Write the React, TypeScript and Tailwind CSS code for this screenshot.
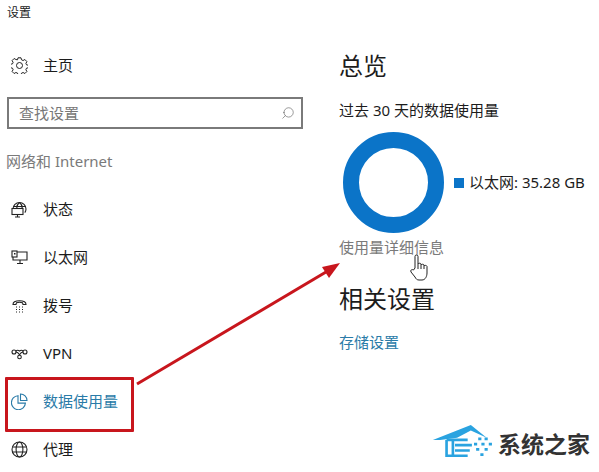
import { Search } from 'lucide-react';

const FONT = "font-['Noto_Sans','Noto_Sans_CJK_SC',sans-serif]";

function GearIcon() {
  return (
    <svg width="17" height="17" viewBox="0 0 17 17" fill="none" stroke="#222" strokeWidth="1">
      <circle cx="8.500" cy="8.500" r="3" />
      <path d="M7 .8h3l.5 2 1.600.7 1.800-1 2 2.100-1 1.800.6 1.400 2 .5v2.400l-2 .5-.6 1.500 1 1.800-2 2-1.800-1-1.600.7-.5 1.900H7l-.5-2-1.600-.6-1.800 1-2-2 1-1.800-.6-1.500-2-.5V7.300l2-.5.6-1.400-1-1.800 2-2.100 1.800 1L6.500 2.800z" />
    </svg>
  );
}

function StatusIcon() {
  return (
    <svg width="17" height="17" viewBox="0 0 17 17" fill="none" stroke="#222" strokeWidth="1.100">
      <path d="M2 8a6.500 6.500 0 1 1 13 0c0 1.500-.4 2.600-1.200 3.600" />
      <path d="M8.500 1.500C6.500 3 5.800 5 5.800 7M8.500 1.500c2 1.500 2.700 3.500 2.700 5.500M2.500 5.500h12" />
      <rect x="1" y="7.500" width="11" height="6" fill="#fff" />
      <path d="M6.500 13.500v2.500M4 16h5" />
    </svg>
  );
}

function EthernetIcon() {
  return (
    <svg width="17" height="17" viewBox="0 0 17 17" fill="none" stroke="#222" strokeWidth="1.100">
      <path d="M6 3h10v8H2V8" />
      <rect x="1" y="2" width="5" height="6" />
      <rect x="3" y="4" width="1.500" height="1.500" fill="#222" stroke="none" />
      <path d="M9 11v3M6 14.500h6" />
    </svg>
  );
}

function DialIcon() {
  return (
    <svg width="17" height="17" viewBox="0 0 17 17" fill="none" stroke="#222" strokeWidth="1.100">
      <path d="M2 7.500c0-1 .3-2 1.500-2.700C6 3.300 11 3.300 13.500 4.800 14.700 5.500 15 6.500 15 7.500h-3l-.5-1.800c-1.500-.5-4.500-.5-6 0L5 7.500z" />
      <path d="M5 10h1M8 10h1M11 10h1M5 12.500h1M8 12.500h1M11 12.500h1M5 15h1M8 15h1M11 15h1" strokeWidth="1" />
    </svg>
  );
}

function VpnIcon() {
  return (
    <svg width="17" height="17" viewBox="0 0 17 17" fill="none" stroke="#222" strokeWidth="1.100">
      <circle cx="3" cy="7" r="2" />
      <circle cx="14" cy="7" r="2" />
      <circle cx="8.500" cy="12" r="1.800" />
      <path d="M5 7c1.500 0 2.500 1 3.500 2.800M12 7c-1.500 0-2.500 1-3.500 2.800M5 6c1-1 2-1.200 3.500 0 1.500-1.200 2.500-1 3.500 0" />
    </svg>
  );
}

function DataIcon() {
  return (
    <svg width="17" height="17" viewBox="0 0 17 17" fill="none" stroke="#2a7ba8" strokeWidth="1.100">
      <path d="M7 2.700a7 7 0 1 0 7.400 7.400H7z" />
      <path d="M9.500 1a6.500 6.500 0 0 1 6.500 6.500H9.500z" />
    </svg>
  );
}

function GlobeIcon() {
  return (
    <svg width="17" height="17" viewBox="0 0 17 17" fill="none" stroke="#222" strokeWidth="1.100">
      <circle cx="8.500" cy="8.500" r="7.500" />
      <ellipse cx="8.500" cy="8.500" rx="3.400" ry="7.500" />
      <path d="M1.500 6h14M1.500 11h14" />
    </svg>
  );
}

function NavRow({ icon, label, active }: { icon: React.ReactNode; label: string; active?: boolean }) {
  return (
    <div className="flex h-12 items-center pl-[11px]">
      <span className="flex w-8 shrink-0">{icon}</span>
      <span className={active ? 'text-[15px] text-[#2a7ba8]' : 'text-[15px] text-[#1c1c1c]'}>{label}</span>
    </div>
  );
}

export default function App() {
  return (
    <div className={`${FONT} relative flex h-[472px] w-[599px] overflow-hidden bg-white`}>
      {/* sidebar */}
      <div className="w-[339px] shrink-0">
        <div className="pl-[7px] pt-[4px] text-xs leading-[18px] text-[#222]">设置</div>
        <div className="mt-[19px]">
          <NavRow icon={<GearIcon />} label="主页" />
        </div>
        <div className="ml-[7px] mt-[8px] flex h-[32px] w-[296px] items-center justify-between border-2 border-[#7a7a7a] pl-[10px] pr-[6px]">
          <span className="text-[15px] text-[#777]">查找设置</span>
          <Search size={14} strokeWidth={1} className="-scale-x-100 text-[#555]" />
        </div>
        <div className="ml-[6px] mt-[21px] text-[15px] leading-[22px] text-[#7a7a7a]">网络和 Internet</div>
        <div className="mt-[13px]">
          <NavRow icon={<StatusIcon />} label="状态" />
          <NavRow icon={<EthernetIcon />} label="以太网" />
          <NavRow icon={<DialIcon />} label="拨号" />
          <NavRow icon={<VpnIcon />} label="VPN" />
          <NavRow icon={<DataIcon />} label="数据使用量" active />
          <NavRow icon={<GlobeIcon />} label="代理" />
        </div>
      </div>

      {/* main */}
      <div className="flex-1 pt-[48px]">
        <h1 className="text-2xl leading-[36px] text-[#1c1c1c]">总览</h1>
        <p className="mt-[15px] text-[15px] leading-[22px] text-[#1c1c1c]">过去 30 天的数据使用量</p>
        <div className="ml-[4px] mt-[11px] flex items-center">
          <div className="h-[101px] w-[101px] rounded-full border-[16px] border-[#0b74c8]" />
          <div className="ml-[10px] h-[10px] w-[10px] bg-[#0b74c8]" />
          <span className="ml-[5px] text-[15px] text-[#1c1c1c]">以太网: 35.28 GB</span>
        </div>
        <p className="mt-[3px] text-[15px] leading-[22px] text-[#7a7a7a]">使用量详细信息</p>
        <h2 className="mt-[23px] text-2xl leading-[36px] text-[#1c1c1c]">相关设置</h2>
        <p className="mt-[14px] text-[15px] leading-[22px] text-[#2a7ba8]">存储设置</p>
      </div>

      {/* annotations on top of the screenshot */}
      <div className="absolute left-[5px] top-[377px] h-[55px] w-[129px] rounded-[1px] border-[3px] border-[#c8161d]" />
      <svg className="absolute left-0 top-0" width="599" height="472" fill="none">
        <path d="M137 384L326 272" stroke="#c8161d" strokeWidth="3" />
        <path d="M340 263L322 267L329 278Z" fill="#c8161d" />
      </svg>

      {/* hand cursor */}
      <svg className="absolute left-[410px] top-[254px]" width="20" height="27" viewBox="0 0 20 27" fill="#fff" stroke="#222" strokeWidth="1">
        <path d="M5 14V2.500a1.500 1.500 0 0 1 3 0V10c0-1 3-1 3 0v1c0-1 3-1 3 0v1c0-1 3-.8 3 .5V19c0 3-1.500 7-5 7H9c-2 0-3-1-4-3l-4-5c-1-2 1-3 2.500-2z" />
        <path d="M8 10v5M11 11v4M14 12v3" />
      </svg>

      {/* watermark */}
      <div className="absolute left-[431px] top-[423px] flex items-center">
        <svg width="67" height="38" viewBox="0 0 62 36" fill="none">
          <path d="M1 16L37 2L52 14L37 7L24 14L8 16Z" fill="#2aa3e0" />
          <path d="M14 16V31H34M14 16H34M20 16V30M22 21H38M22 26H36" stroke="#2aa3e0" strokeWidth="2.500" />
          <path d="M44 15h3M50 15h3M40 20h3M47 20h3M54 20h3M42 25h3M50 25h3M46 30h3" stroke="#2aa3e0" strokeWidth="2.500" />
        </svg>
        <span className="mt-[4px] text-[23px] font-bold leading-none text-[#333]">系统之家</span>
      </div>
    </div>
  );
}
